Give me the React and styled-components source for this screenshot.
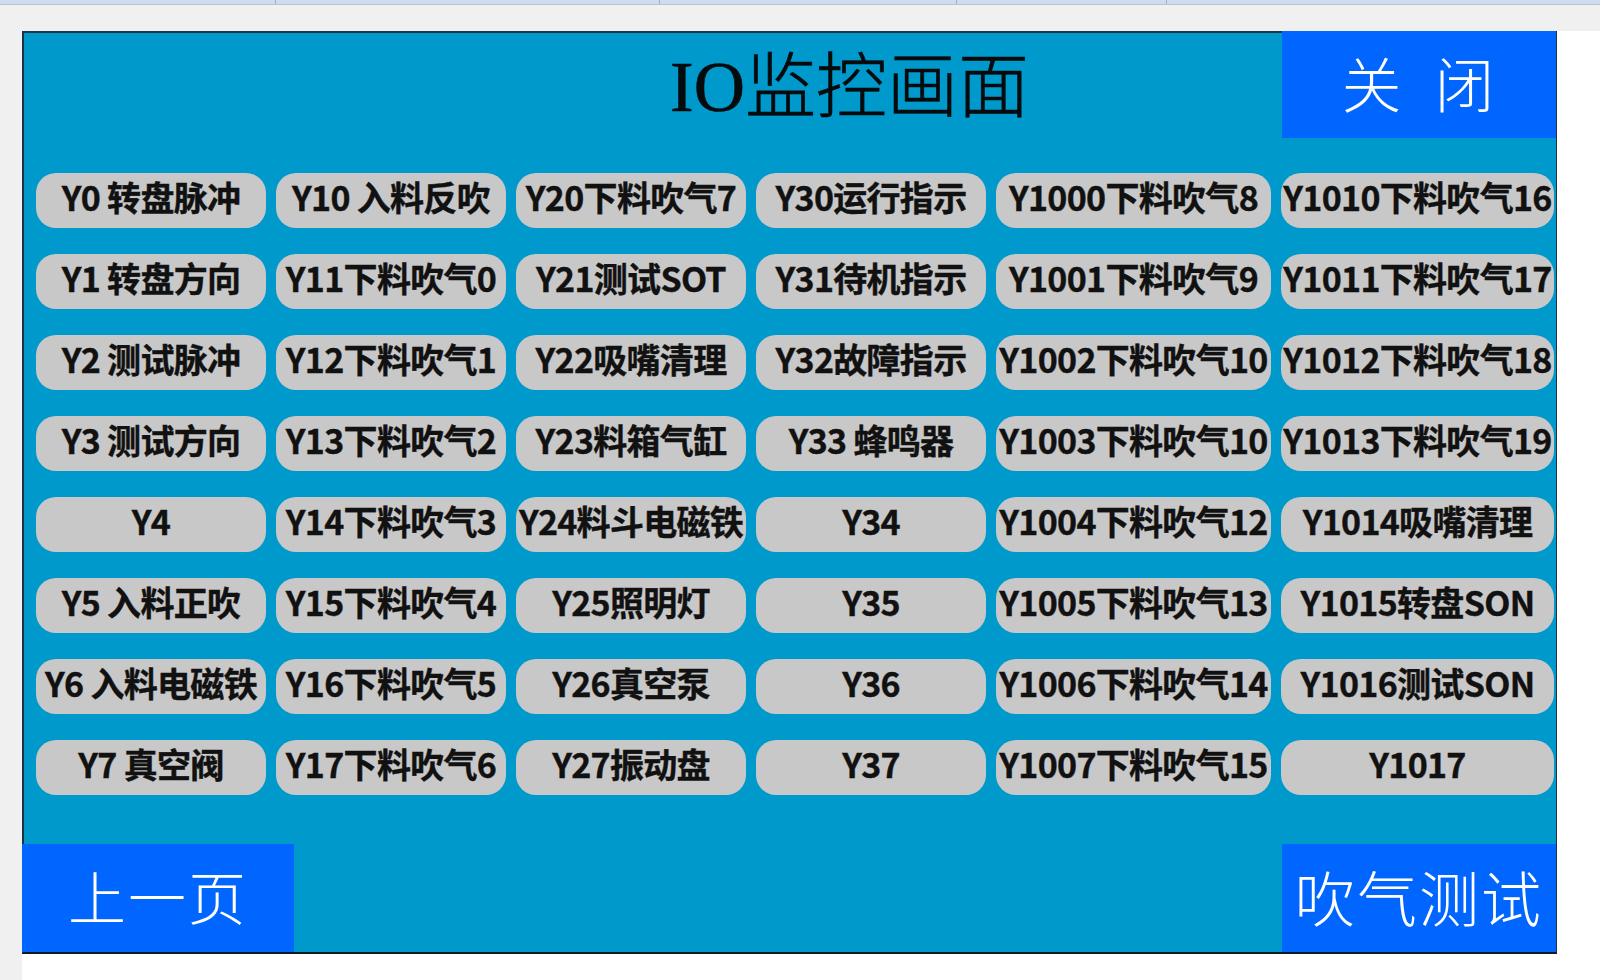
import React from 'react';
import styled, { createGlobalStyle } from 'styled-components';

const GlobalStyle = createGlobalStyle`
  html, body {
    margin: 0;
    padding: 0;
    background: #ffffff;
  }
  body {
    font-family: "Noto Sans CJK SC", "Noto Sans", sans-serif;
  }
`;

const rows = [
  ['Y0 转盘脉冲', 'Y10 入料反吹', 'Y20下料吹气7', 'Y30运行指示', 'Y1000下料吹气8', 'Y1010下料吹气16'],
  ['Y1 转盘方向', 'Y11下料吹气0', 'Y21测试SOT', 'Y31待机指示', 'Y1001下料吹气9', 'Y1011下料吹气17'],
  ['Y2 测试脉冲', 'Y12下料吹气1', 'Y22吸嘴清理', 'Y32故障指示', 'Y1002下料吹气10', 'Y1012下料吹气18'],
  ['Y3 测试方向', 'Y13下料吹气2', 'Y23料箱气缸', 'Y33 蜂鸣器', 'Y1003下料吹气10', 'Y1013下料吹气19'],
  ['Y4', 'Y14下料吹气3', 'Y24料斗电磁铁', 'Y34', 'Y1004下料吹气12', 'Y1014吸嘴清理'],
  ['Y5 入料正吹', 'Y15下料吹气4', 'Y25照明灯', 'Y35', 'Y1005下料吹气13', 'Y1015转盘SON'],
  ['Y6 入料电磁铁', 'Y16下料吹气5', 'Y26真空泵', 'Y36', 'Y1006下料吹气14', 'Y1016测试SON'],
  ['Y7 真空阀', 'Y17下料吹气6', 'Y27振动盘', 'Y37', 'Y1007下料吹气15', 'Y1017'],
];

const tabs = [275, 383, 296, 209];

const App = () => {
  return (
    <Page>
      <GlobalStyle />
      <TopStrip>
        {tabs.map((w, i) => (
          <Tab key={i} $w={w} />
        ))}
      </TopStrip>
      <GrayBand />
      <Main>
        <Gutter />
        <Content>
          <Panel>
            <Header>
              <Title>IO监控画面</Title>
              <BlueButton $w={274} $h={107} $top $size={60} $gap={14}>
                关 闭
              </BlueButton>
            </Header>
            <Grid>
              {rows.flat().map((label, i) => (
                <IoButton key={i}>{label}</IoButton>
              ))}
            </Grid>
            <Footer>
              <BlueButton $w={272} $h={108} $left>上一页</BlueButton>
              <BlueButton $w={274} $h={108} $size={60}>吹气测试</BlueButton>
            </Footer>
          </Panel>
        </Content>
      </Main>
    </Page>
  );
};

const Page = styled.div`
  width: 1600px;
  height: 980px;
  display: flex;
  flex-direction: column;
  overflow: hidden;
  background: #ffffff;
`;

const TopStrip = styled.div`
  height: 4px;
  display: flex;
  background: #cfdcef;
  border-bottom: 1px solid #b9c3d1;
`;

const Tab = styled.div`
  width: ${(p) => p.$w}px;
  border-right: 1px solid #9fb1c9;
`;

const GrayBand = styled.div`
  height: 26px;
  background: #f0f0f0;
`;

const Main = styled.div`
  flex: 1;
  display: flex;
`;

const Gutter = styled.div`
  width: 22px;
  background: #f0f0f0;
`;

const Content = styled.div`
  flex: 1;
  display: flex;
  flex-direction: column;
`;

const Panel = styled.div`
  width: 1532px;
  height: 919px;
  background: #0099cc;
  border-top: 2px solid #17384a;
  border-left: 2px solid #1d3340;
  border-right: 1px solid #1d3340;
  border-bottom: 2px solid #111a20;
  display: flex;
  flex-direction: column;
`;

const Header = styled.div`
  height: 105px;
  display: flex;
  align-items: flex-start;
  justify-content: space-between;
`;

const Title = styled.div`
  padding-left: 646px;
  padding-top: 9px;
  font-family: "Liberation Serif", "Noto Sans CJK SC", serif;
  font-weight: 300;
  font-size: 71px;
  line-height: 90px;
  color: #050a0c;
  white-space: nowrap;
  -webkit-text-stroke: 0.6px #050a0c;
`;

const BlueButton = styled.div`
  width: ${(p) => p.$w}px;
  height: ${(p) => p.$h}px;
  margin-top: ${(p) => (p.$top ? '-2px' : '0')};
  margin-left: ${(p) => (p.$left ? '-2px' : '0')};
  padding-bottom: 6px;
  box-sizing: border-box;
  background: #0066ff;
  color: #ffffff;
  display: flex;
  align-items: center;
  justify-content: center;
  font-family: "Liberation Serif", "Noto Sans CJK SC", serif;
  font-weight: 300;
  font-size: ${(p) => p.$size || 58}px;
  letter-spacing: 2px;
  word-spacing: ${(p) => p.$gap || 0}px;
  white-space: pre;
`;

const Grid = styled.div`
  margin-top: 35px;
  padding-left: 12px;
  display: grid;
  grid-template-columns: 230px 230px 230px 230px 275px 273px;
  grid-auto-rows: 55px;
  column-gap: 10px;
  row-gap: 26px;
`;

const IoButton = styled.div`
  background: #c8c8c8;
  border-radius: 20px;
  display: flex;
  align-items: center;
  justify-content: center;
  padding-bottom: 8px;
  box-sizing: border-box;
  font-family: "Noto Sans CJK SC", "Noto Sans", sans-serif;
  font-weight: 700;
  font-size: 34px;
  line-height: 1;
  letter-spacing: -0.7px;
  color: #111111;
  -webkit-text-stroke: 0.4px #111111;
  white-space: nowrap;
  overflow: visible;
`;

const Footer = styled.div`
  margin-top: auto;
  display: flex;
  justify-content: space-between;
`;

export default App;
